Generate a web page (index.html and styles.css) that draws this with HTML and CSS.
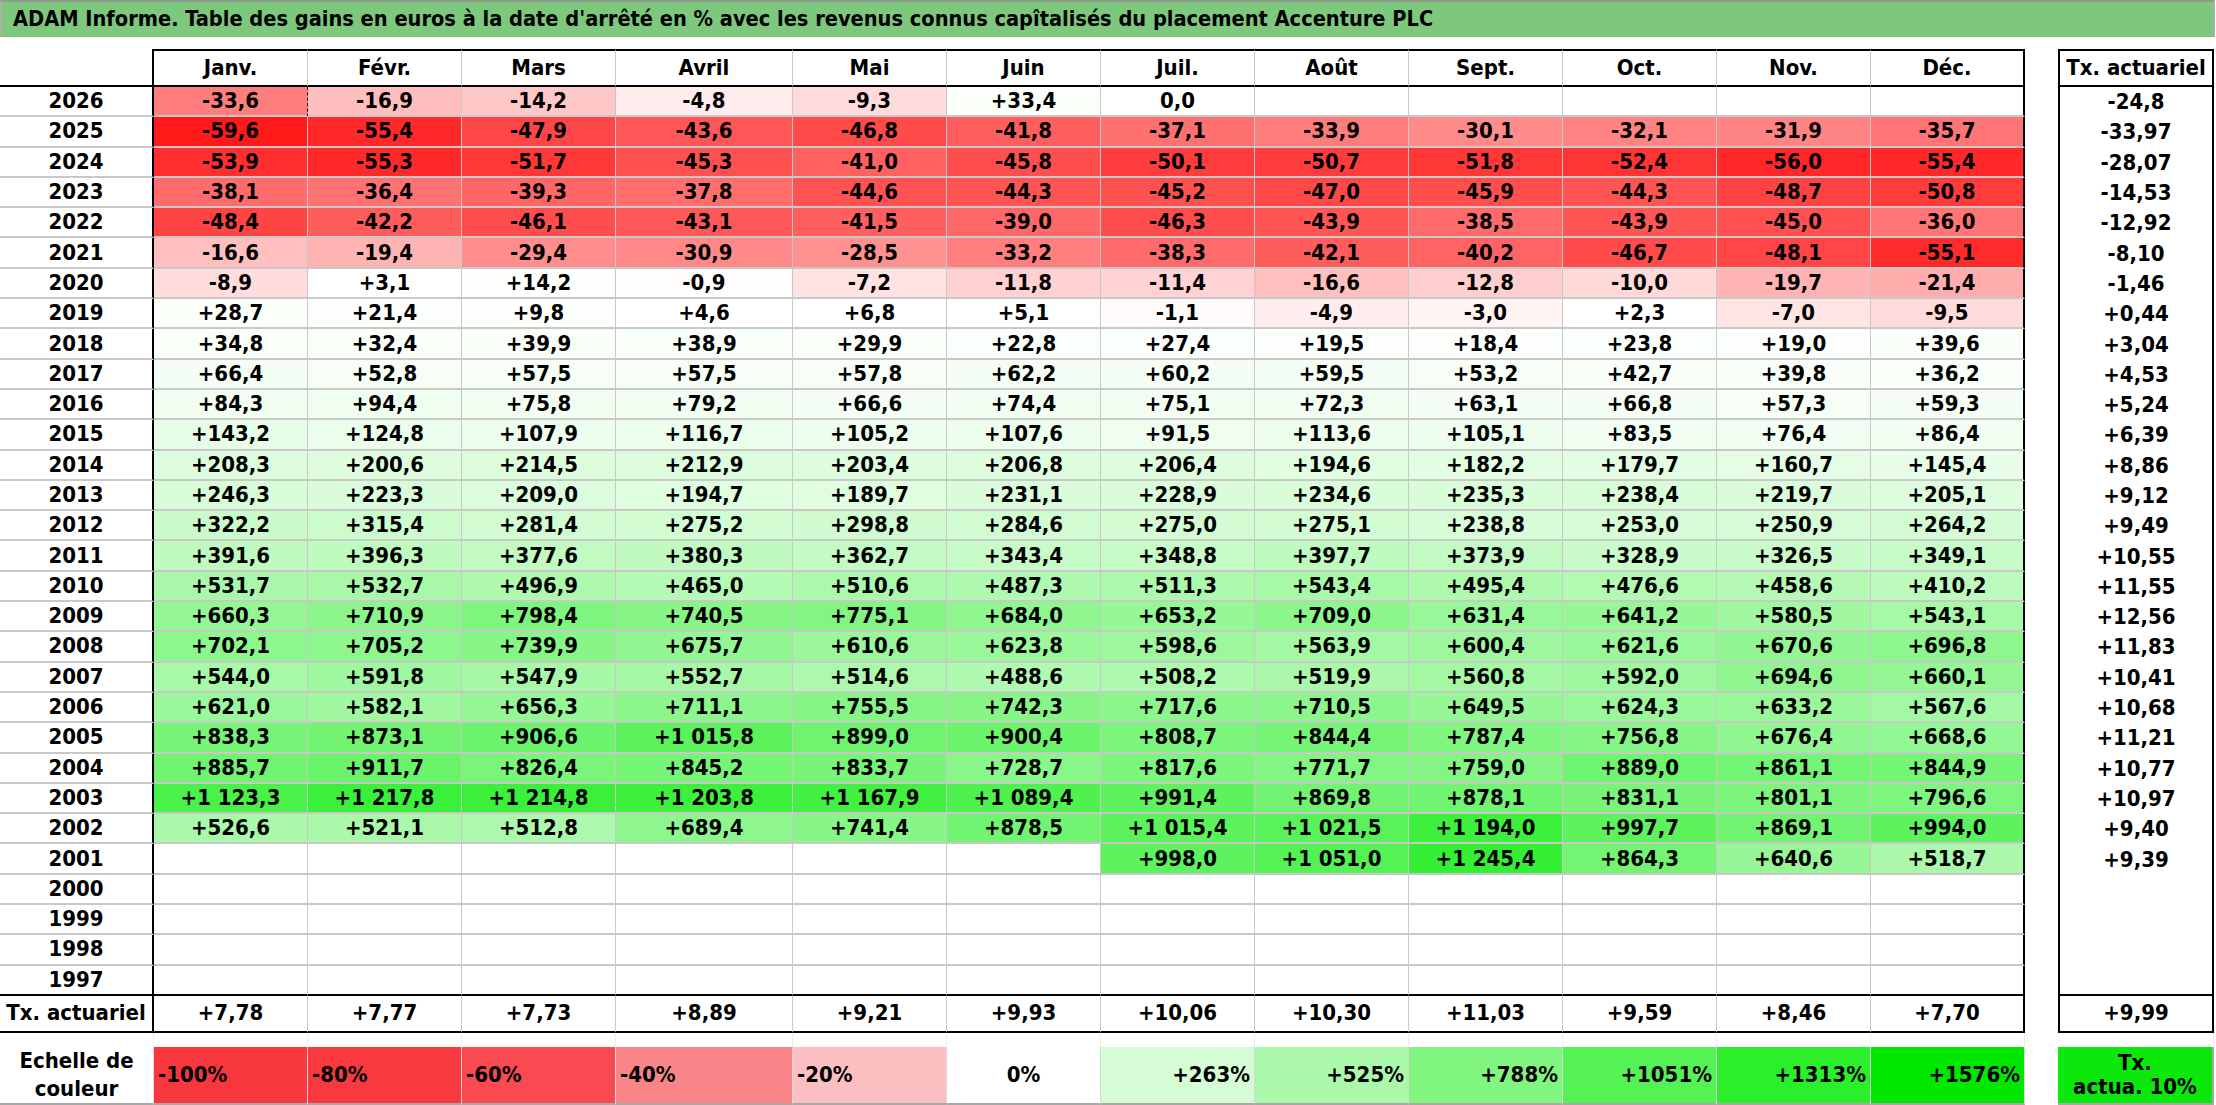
FILE: index.html
```html
<!DOCTYPE html>
<html lang="fr">
<head>
<meta charset="utf-8">
<title>ADAM Informe - Accenture PLC</title>
<link rel="stylesheet" href="styles.css">
</head>
<body>
<div class="title">ADAM Informe. Table des gains en euros à la date d'arrêté en % avec les revenus connus capîtalisés du placement Accenture PLC</div>
<table class="sheet">
<colgroup>
<col class="w-yr"><col class="w-m"><col class="w-m"><col class="w-m"><col class="w-wide"><col class="w-m"><col class="w-m"><col class="w-m"><col class="w-m"><col class="w-m"><col class="w-m"><col class="w-m"><col class="w-m"><col class="w-sp"><col class="w-tx">
</colgroup>
<thead>
<tr class="hdr"><th class="corner"></th><th>Janv.</th><th>Févr.</th><th>Mars</th><th>Avril</th><th>Mai</th><th>Juin</th><th>Juil.</th><th>Août</th><th>Sept.</th><th>Oct.</th><th>Nov.</th><th class="end">Déc.</th><td class="sp"></td><th class="tx">Tx. actuariel</th></tr>
</thead>
<tbody>
<tr class="r"><th class="yr">2026</th><td class="v dash">-33,6</td><td class="v">-16,9</td><td class="v">-14,2</td><td class="v">-4,8</td><td class="v">-9,3</td><td class="v">+33,4</td><td class="v">0,0</td><td class="v"></td><td class="v"></td><td class="v"></td><td class="v"></td><td class="v end"></td><td class="sp"></td><td class="tx">-24,8</td></tr>
<tr class="r"><th class="yr">2025</th><td class="v">-59,6</td><td class="v">-55,4</td><td class="v">-47,9</td><td class="v">-43,6</td><td class="v">-46,8</td><td class="v">-41,8</td><td class="v">-37,1</td><td class="v">-33,9</td><td class="v">-30,1</td><td class="v">-32,1</td><td class="v">-31,9</td><td class="v end">-35,7</td><td class="sp"></td><td class="tx">-33,97</td></tr>
<tr class="r"><th class="yr">2024</th><td class="v">-53,9</td><td class="v">-55,3</td><td class="v">-51,7</td><td class="v">-45,3</td><td class="v">-41,0</td><td class="v">-45,8</td><td class="v">-50,1</td><td class="v">-50,7</td><td class="v">-51,8</td><td class="v">-52,4</td><td class="v">-56,0</td><td class="v end">-55,4</td><td class="sp"></td><td class="tx">-28,07</td></tr>
<tr class="r"><th class="yr">2023</th><td class="v">-38,1</td><td class="v">-36,4</td><td class="v">-39,3</td><td class="v">-37,8</td><td class="v">-44,6</td><td class="v">-44,3</td><td class="v">-45,2</td><td class="v">-47,0</td><td class="v">-45,9</td><td class="v">-44,3</td><td class="v">-48,7</td><td class="v end">-50,8</td><td class="sp"></td><td class="tx">-14,53</td></tr>
<tr class="r"><th class="yr">2022</th><td class="v">-48,4</td><td class="v">-42,2</td><td class="v">-46,1</td><td class="v">-43,1</td><td class="v">-41,5</td><td class="v">-39,0</td><td class="v">-46,3</td><td class="v">-43,9</td><td class="v">-38,5</td><td class="v">-43,9</td><td class="v">-45,0</td><td class="v end">-36,0</td><td class="sp"></td><td class="tx">-12,92</td></tr>
<tr class="r"><th class="yr">2021</th><td class="v">-16,6</td><td class="v">-19,4</td><td class="v">-29,4</td><td class="v">-30,9</td><td class="v">-28,5</td><td class="v">-33,2</td><td class="v">-38,3</td><td class="v">-42,1</td><td class="v">-40,2</td><td class="v">-46,7</td><td class="v">-48,1</td><td class="v end">-55,1</td><td class="sp"></td><td class="tx">-8,10</td></tr>
<tr class="r"><th class="yr">2020</th><td class="v">-8,9</td><td class="v">+3,1</td><td class="v">+14,2</td><td class="v">-0,9</td><td class="v">-7,2</td><td class="v">-11,8</td><td class="v">-11,4</td><td class="v">-16,6</td><td class="v">-12,8</td><td class="v">-10,0</td><td class="v">-19,7</td><td class="v end">-21,4</td><td class="sp"></td><td class="tx">-1,46</td></tr>
<tr class="r"><th class="yr">2019</th><td class="v">+28,7</td><td class="v">+21,4</td><td class="v">+9,8</td><td class="v">+4,6</td><td class="v">+6,8</td><td class="v">+5,1</td><td class="v">-1,1</td><td class="v">-4,9</td><td class="v">-3,0</td><td class="v">+2,3</td><td class="v">-7,0</td><td class="v end">-9,5</td><td class="sp"></td><td class="tx">+0,44</td></tr>
<tr class="r"><th class="yr">2018</th><td class="v">+34,8</td><td class="v">+32,4</td><td class="v">+39,9</td><td class="v">+38,9</td><td class="v">+29,9</td><td class="v">+22,8</td><td class="v">+27,4</td><td class="v">+19,5</td><td class="v">+18,4</td><td class="v">+23,8</td><td class="v">+19,0</td><td class="v end">+39,6</td><td class="sp"></td><td class="tx">+3,04</td></tr>
<tr class="r"><th class="yr">2017</th><td class="v">+66,4</td><td class="v">+52,8</td><td class="v">+57,5</td><td class="v">+57,5</td><td class="v">+57,8</td><td class="v">+62,2</td><td class="v">+60,2</td><td class="v">+59,5</td><td class="v">+53,2</td><td class="v">+42,7</td><td class="v">+39,8</td><td class="v end">+36,2</td><td class="sp"></td><td class="tx">+4,53</td></tr>
<tr class="r"><th class="yr">2016</th><td class="v">+84,3</td><td class="v">+94,4</td><td class="v">+75,8</td><td class="v">+79,2</td><td class="v">+66,6</td><td class="v">+74,4</td><td class="v">+75,1</td><td class="v">+72,3</td><td class="v">+63,1</td><td class="v">+66,8</td><td class="v">+57,3</td><td class="v end">+59,3</td><td class="sp"></td><td class="tx">+5,24</td></tr>
<tr class="r"><th class="yr">2015</th><td class="v">+143,2</td><td class="v">+124,8</td><td class="v">+107,9</td><td class="v">+116,7</td><td class="v">+105,2</td><td class="v">+107,6</td><td class="v">+91,5</td><td class="v">+113,6</td><td class="v">+105,1</td><td class="v">+83,5</td><td class="v">+76,4</td><td class="v end">+86,4</td><td class="sp"></td><td class="tx">+6,39</td></tr>
<tr class="r"><th class="yr">2014</th><td class="v">+208,3</td><td class="v">+200,6</td><td class="v">+214,5</td><td class="v">+212,9</td><td class="v">+203,4</td><td class="v">+206,8</td><td class="v">+206,4</td><td class="v">+194,6</td><td class="v">+182,2</td><td class="v">+179,7</td><td class="v">+160,7</td><td class="v end">+145,4</td><td class="sp"></td><td class="tx">+8,86</td></tr>
<tr class="r"><th class="yr">2013</th><td class="v">+246,3</td><td class="v">+223,3</td><td class="v">+209,0</td><td class="v">+194,7</td><td class="v">+189,7</td><td class="v">+231,1</td><td class="v">+228,9</td><td class="v">+234,6</td><td class="v">+235,3</td><td class="v">+238,4</td><td class="v">+219,7</td><td class="v end">+205,1</td><td class="sp"></td><td class="tx">+9,12</td></tr>
<tr class="r"><th class="yr">2012</th><td class="v">+322,2</td><td class="v">+315,4</td><td class="v">+281,4</td><td class="v">+275,2</td><td class="v">+298,8</td><td class="v">+284,6</td><td class="v">+275,0</td><td class="v">+275,1</td><td class="v">+238,8</td><td class="v">+253,0</td><td class="v">+250,9</td><td class="v end">+264,2</td><td class="sp"></td><td class="tx">+9,49</td></tr>
<tr class="r"><th class="yr">2011</th><td class="v">+391,6</td><td class="v">+396,3</td><td class="v">+377,6</td><td class="v">+380,3</td><td class="v">+362,7</td><td class="v">+343,4</td><td class="v">+348,8</td><td class="v">+397,7</td><td class="v">+373,9</td><td class="v">+328,9</td><td class="v">+326,5</td><td class="v end">+349,1</td><td class="sp"></td><td class="tx">+10,55</td></tr>
<tr class="r"><th class="yr">2010</th><td class="v">+531,7</td><td class="v">+532,7</td><td class="v">+496,9</td><td class="v">+465,0</td><td class="v">+510,6</td><td class="v">+487,3</td><td class="v">+511,3</td><td class="v">+543,4</td><td class="v">+495,4</td><td class="v">+476,6</td><td class="v">+458,6</td><td class="v end">+410,2</td><td class="sp"></td><td class="tx">+11,55</td></tr>
<tr class="r"><th class="yr">2009</th><td class="v">+660,3</td><td class="v">+710,9</td><td class="v">+798,4</td><td class="v">+740,5</td><td class="v">+775,1</td><td class="v">+684,0</td><td class="v">+653,2</td><td class="v">+709,0</td><td class="v">+631,4</td><td class="v">+641,2</td><td class="v">+580,5</td><td class="v end">+543,1</td><td class="sp"></td><td class="tx">+12,56</td></tr>
<tr class="r"><th class="yr">2008</th><td class="v">+702,1</td><td class="v">+705,2</td><td class="v">+739,9</td><td class="v">+675,7</td><td class="v">+610,6</td><td class="v">+623,8</td><td class="v">+598,6</td><td class="v">+563,9</td><td class="v">+600,4</td><td class="v">+621,6</td><td class="v">+670,6</td><td class="v end">+696,8</td><td class="sp"></td><td class="tx">+11,83</td></tr>
<tr class="r"><th class="yr">2007</th><td class="v">+544,0</td><td class="v">+591,8</td><td class="v">+547,9</td><td class="v">+552,7</td><td class="v">+514,6</td><td class="v">+488,6</td><td class="v">+508,2</td><td class="v">+519,9</td><td class="v">+560,8</td><td class="v">+592,0</td><td class="v">+694,6</td><td class="v end">+660,1</td><td class="sp"></td><td class="tx">+10,41</td></tr>
<tr class="r"><th class="yr">2006</th><td class="v">+621,0</td><td class="v">+582,1</td><td class="v">+656,3</td><td class="v">+711,1</td><td class="v">+755,5</td><td class="v">+742,3</td><td class="v">+717,6</td><td class="v">+710,5</td><td class="v">+649,5</td><td class="v">+624,3</td><td class="v">+633,2</td><td class="v end">+567,6</td><td class="sp"></td><td class="tx">+10,68</td></tr>
<tr class="r"><th class="yr">2005</th><td class="v">+838,3</td><td class="v">+873,1</td><td class="v">+906,6</td><td class="v">+1&nbsp;015,8</td><td class="v">+899,0</td><td class="v">+900,4</td><td class="v">+808,7</td><td class="v">+844,4</td><td class="v">+787,4</td><td class="v">+756,8</td><td class="v">+676,4</td><td class="v end">+668,6</td><td class="sp"></td><td class="tx">+11,21</td></tr>
<tr class="r"><th class="yr">2004</th><td class="v">+885,7</td><td class="v">+911,7</td><td class="v">+826,4</td><td class="v">+845,2</td><td class="v">+833,7</td><td class="v">+728,7</td><td class="v">+817,6</td><td class="v">+771,7</td><td class="v">+759,0</td><td class="v">+889,0</td><td class="v">+861,1</td><td class="v end">+844,9</td><td class="sp"></td><td class="tx">+10,77</td></tr>
<tr class="r"><th class="yr">2003</th><td class="v">+1&nbsp;123,3</td><td class="v">+1&nbsp;217,8</td><td class="v">+1&nbsp;214,8</td><td class="v">+1&nbsp;203,8</td><td class="v">+1&nbsp;167,9</td><td class="v">+1&nbsp;089,4</td><td class="v">+991,4</td><td class="v">+869,8</td><td class="v">+878,1</td><td class="v">+831,1</td><td class="v">+801,1</td><td class="v end">+796,6</td><td class="sp"></td><td class="tx">+10,97</td></tr>
<tr class="r"><th class="yr">2002</th><td class="v">+526,6</td><td class="v">+521,1</td><td class="v">+512,8</td><td class="v">+689,4</td><td class="v">+741,4</td><td class="v">+878,5</td><td class="v">+1&nbsp;015,4</td><td class="v">+1&nbsp;021,5</td><td class="v">+1&nbsp;194,0</td><td class="v">+997,7</td><td class="v">+869,1</td><td class="v end">+994,0</td><td class="sp"></td><td class="tx">+9,40</td></tr>
<tr class="r"><th class="yr">2001</th><td class="v"></td><td class="v"></td><td class="v"></td><td class="v"></td><td class="v"></td><td class="v"></td><td class="v">+998,0</td><td class="v">+1&nbsp;051,0</td><td class="v">+1&nbsp;245,4</td><td class="v">+864,3</td><td class="v">+640,6</td><td class="v end">+518,7</td><td class="sp"></td><td class="tx">+9,39</td></tr>
<tr class="r"><th class="yr">2000</th><td class="v"></td><td class="v"></td><td class="v"></td><td class="v"></td><td class="v"></td><td class="v"></td><td class="v"></td><td class="v"></td><td class="v"></td><td class="v"></td><td class="v"></td><td class="v end"></td><td class="sp"></td><td class="tx"></td></tr>
<tr class="r"><th class="yr">1999</th><td class="v"></td><td class="v"></td><td class="v"></td><td class="v"></td><td class="v"></td><td class="v"></td><td class="v"></td><td class="v"></td><td class="v"></td><td class="v"></td><td class="v"></td><td class="v end"></td><td class="sp"></td><td class="tx"></td></tr>
<tr class="r"><th class="yr">1998</th><td class="v"></td><td class="v"></td><td class="v"></td><td class="v"></td><td class="v"></td><td class="v"></td><td class="v"></td><td class="v"></td><td class="v"></td><td class="v"></td><td class="v"></td><td class="v end"></td><td class="sp"></td><td class="tx"></td></tr>
<tr class="r last"><th class="yr">1997</th><td class="v"></td><td class="v"></td><td class="v"></td><td class="v"></td><td class="v"></td><td class="v"></td><td class="v"></td><td class="v"></td><td class="v"></td><td class="v"></td><td class="v"></td><td class="v end"></td><td class="sp"></td><td class="tx"></td></tr>
<tr class="foot"><th class="yr">Tx. actuariel</th><td>+7,78</td><td>+7,77</td><td>+7,73</td><td>+8,89</td><td>+9,21</td><td>+9,93</td><td>+10,06</td><td>+10,30</td><td>+11,03</td><td>+9,59</td><td>+8,46</td><td class="end">+7,70</td><td class="sp"></td><td class="tx">+9,99</td></tr>
<tr class="gap"><td></td><td></td><td></td><td></td><td></td><td></td><td></td><td></td><td></td><td></td><td></td><td></td><td></td><td class="sp"></td><td></td></tr>
<tr class="scale"><th class="lbl">Echelle de<br>couleur</th><td class="neg s-100">-100%</td><td class="neg s-80">-80%</td><td class="neg s-60">-60%</td><td class="neg s-40">-40%</td><td class="neg s-20">-20%</td><td class="zero">0%</td><td class="pos s263">+263%</td><td class="pos s525">+525%</td><td class="pos s788">+788%</td><td class="pos s1051">+1051%</td><td class="pos s1313">+1313%</td><td class="pos s1576">+1576%</td><td class="sp"></td><td class="txa">Tx.<br>actua. 10%</td></tr>
</tbody>
</table>
<script src="script.js"></script>
</body>
</html>
```

FILE: styles.css
```css
html, body {
  margin: 0;
  padding: 0;
  background: #ffffff;
}
body {
  width: 2216px;
  font-family: "DejaVu Sans Condensed", "DejaVu Sans", sans-serif;
  font-stretch: condensed;
  font-weight: bold;
  color: #000;
}
.title {
  box-sizing: border-box;
  width: 2215px;
  height: 37px;
  background: #7dc87d;
  border-top: 2px solid #8f9a8f;
  border-left: 2px solid #a8b2a8;
  border-right: 2px solid #a8b2a8;
  padding-left: 11px;
  font-size: 21.6px;
  line-height: 34px;
  white-space: nowrap;
}
.sheet {
  margin-top: 12px;
  table-layout: fixed;
  width: 2214px;
  border-collapse: separate;
  border-spacing: 0;
  font-size: 22px;
}
.w-yr { width: 154px; }
.w-m { width: 154px; }
.w-wide { width: 177px; }
.w-sp { width: 33px; }
.w-tx { width: 156px; }

.sheet th, .sheet td {
  box-sizing: border-box;
  padding: 0;
  text-align: center;
  vertical-align: middle;
  white-space: nowrap;
  font-weight: bold;
  line-height: 1;
}

/* header */
.hdr th, .hdr td { height: 38px; }
.hdr th {
  border-top: 2px solid #000;
  border-bottom: 2px solid #000;
  border-right: 1px solid #c8c8c8;
  font-size: 22px;
}
.hdr th.corner {
  border-top: 0;
  border-right: 2px solid #000;
}
.hdr th.end { border-right: 2px solid #000; }
.hdr th.tx {
  border: 2px solid #000;
  font-size: 22px;
}
.sp { border: 0; background: #fff; }

/* data rows */
.r th, .r td { height: 30.3px; }
.yr {
  border-right: 2px solid #000;
  border-bottom: 2px solid #c8c8c8;
}
.v {
  border-right: 1px solid #c8c8c8;
  border-bottom: 2px solid #c8c8c8;
}
.v.end { border-right: 2px solid #000; }
.v.dash { border-right: 1px dashed #000; }
.r td.tx {
  border-left: 2px solid #000;
  border-right: 2px solid #000;
}
.r.last th, .r.last td.v, .r.last td.tx { border-bottom: 2px solid #000; }

/* actuarial row */
.foot th, .foot td { height: 37px; }
.foot th.yr { border-bottom: 2px solid #000; font-size: 22px; }
.foot td {
  border-right: 1px solid #c8c8c8;
  border-bottom: 2px solid #000;
}
.foot td.end { border-right: 2px solid #000; }
.foot td.tx {
  border-left: 2px solid #000;
  border-right: 2px solid #000;
  border-bottom: 2px solid #000;
}
.foot td.sp { border: 0; }

/* gap */
.gap td { height: 14px; border-right: 1px solid #ececec; }
.gap td.sp { border: 0; }

/* colour scale */
.scale th, .scale td {
  height: 56px;
  border-bottom: 2px solid #a8a8a8;
  border-right: 1px solid #d8d8d8;
}
.scale th.lbl {
  line-height: 28px;
  font-size: 22px;
}
.scale td.sp { border-right: 0; border-bottom: 0; }
.scale .neg { text-align: left; padding-left: 4px; }
.scale .pos { text-align: right; padding-right: 4px; }
.scale .zero { text-align: center; }
.s-100 { background: #f7363d; }
.s-80 { background: #f8393f; }
.s-60 { background: #f84a50; }
.s-40 { background: #f98589; }
.s-20 { background: #fbbfc1; }
.s263 { background: #d5fcd5; }
.s525 { background: #aaf8aa; }
.s788 { background: #80f580; }
.s1051 { background: #55f255; }
.s1313 { background: #2bef2b; }
.s1576 { background: #00e800; }
.scale td.txa {
  background: #0ce80c;
  line-height: 24px;
  border-right: 2px solid #a8a8a8;
}
```

FILE: script.js
```js
// Colour each value cell on a red (negative) / green (positive) scale computed from its number.
document.querySelectorAll('td.v').forEach(function (td) {
  var t = td.textContent.replace(/\s/g, '').replace('+', '').replace(',', '.');
  if (!t) return;
  var v = parseFloat(t);
  if (isNaN(v) || v === 0) return;
  var r, g, b;
  if (v < 0) {
    var c = Math.max(0, Math.round(255 * (1 + v / 66)));
    r = 255; g = c; b = c;
  } else {
    var f = Math.min(1, v / 1576);
    var k = Math.round(255 * (1 - f));
    r = k; b = k; g = Math.round(255 - 20 * f);
  }
  td.style.backgroundColor = 'rgb(' + r + ',' + g + ',' + b + ')';
});
```
